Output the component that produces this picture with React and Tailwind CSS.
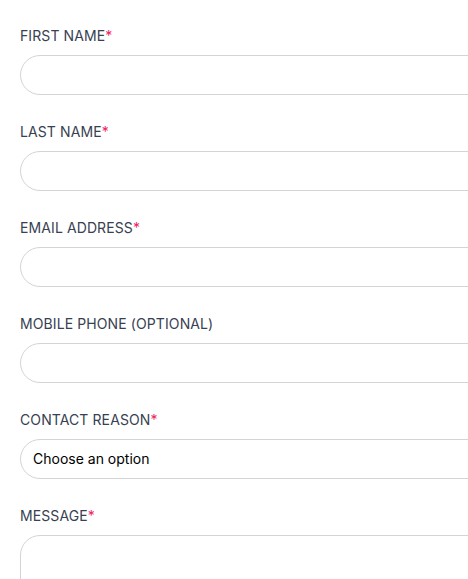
export default function App() {
  const fields = [
    { label: "FIRST NAME", req: true },
    { label: "LAST NAME", req: true },
    { label: "EMAIL ADDRESS", req: true },
    { label: "MOBILE PHONE (OPTIONAL)", req: false },
    { label: "CONTACT REASON", req: true, select: true },
  ];
  return (
    <div className="w-[468px] h-[579px] overflow-hidden bg-white pl-5 pt-[26px]" style={{ fontFamily: "Inter, 'Liberation Sans', sans-serif" }}>
      <div className="w-[520px] flex flex-col">
        {fields.map((f) => (
          <div key={f.label} className="flex flex-col mb-[27px]">
            <label className="text-[14px] leading-5 tracking-[0.1px] text-[#374151] mb-[9px]">
              {f.label}
              {f.req && <span className="text-[#f0225a]">*</span>}
            </label>
            <div className="h-10 rounded-[20px] border border-[#d4d4d8] bg-white flex items-center px-3 pb-[1px] text-[14px] text-black">
              {f.select ? "Choose an option" : ""}
            </div>
          </div>
        ))}
        <div className="flex flex-col">
          <label className="text-[14px] leading-5 tracking-[0.1px] text-[#374151] mb-[9px]">
            MESSAGE<span className="text-[#f0225a]">*</span>
          </label>
          <div className="h-[120px] rounded-[20px] border border-[#d4d4d8] bg-white"></div>
        </div>
      </div>
    </div>
  );
}
